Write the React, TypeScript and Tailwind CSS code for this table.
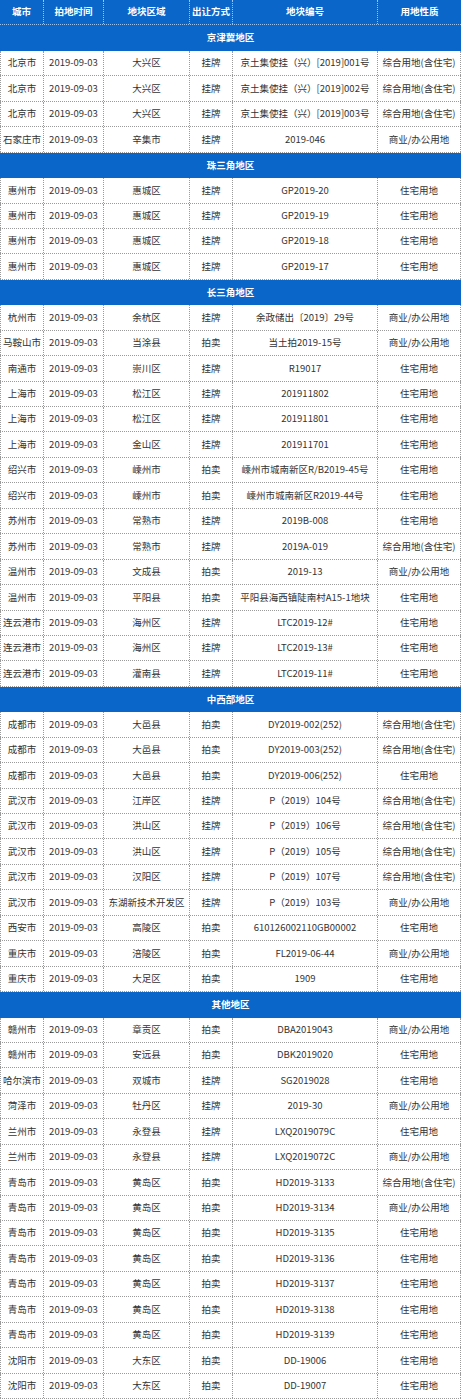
import React from 'react';

type Row = [string, string, string, string, string];

const DATE = '2019-09-03';

const sections: { title: string; rows: Row[] }[] = [
  {
    title: '京津冀地区',
    rows: [
      ['北京市', '大兴区', '挂牌', '京土集使挂（兴）[2019]001号', '综合用地(含住宅)'],
      ['北京市', '大兴区', '挂牌', '京土集使挂（兴）[2019]002号', '综合用地(含住宅)'],
      ['北京市', '大兴区', '挂牌', '京土集使挂（兴）[2019]003号', '综合用地(含住宅)'],
      ['石家庄市', '辛集市', '挂牌', '2019-046', '商业/办公用地'],
    ],
  },
  {
    title: '珠三角地区',
    rows: [
      ['惠州市', '惠城区', '挂牌', 'GP2019-20', '住宅用地'],
      ['惠州市', '惠城区', '挂牌', 'GP2019-19', '住宅用地'],
      ['惠州市', '惠城区', '挂牌', 'GP2019-18', '住宅用地'],
      ['惠州市', '惠城区', '挂牌', 'GP2019-17', '住宅用地'],
    ],
  },
  {
    title: '长三角地区',
    rows: [
      ['杭州市', '余杭区', '挂牌', '余政储出〔2019〕29号', '商业/办公用地'],
      ['马鞍山市', '当涂县', '拍卖', '当土拍2019-15号', '商业/办公用地'],
      ['南通市', '崇川区', '挂牌', 'R19017', '住宅用地'],
      ['上海市', '松江区', '挂牌', '201911802', '住宅用地'],
      ['上海市', '松江区', '挂牌', '201911801', '住宅用地'],
      ['上海市', '金山区', '挂牌', '201911701', '住宅用地'],
      ['绍兴市', '嵊州市', '拍卖', '嵊州市城南新区R/B2019-45号', '住宅用地'],
      ['绍兴市', '嵊州市', '拍卖', '嵊州市城南新区R2019-44号', '住宅用地'],
      ['苏州市', '常熟市', '挂牌', '2019B-008', '住宅用地'],
      ['苏州市', '常熟市', '挂牌', '2019A-019', '综合用地(含住宅)'],
      ['温州市', '文成县', '拍卖', '2019-13', '商业/办公用地'],
      ['温州市', '平阳县', '拍卖', '平阳县海西镇陡南村A15-1地块', '住宅用地'],
      ['连云港市', '海州区', '挂牌', 'LTC2019-12#', '住宅用地'],
      ['连云港市', '海州区', '挂牌', 'LTC2019-13#', '住宅用地'],
      ['连云港市', '灌南县', '挂牌', 'LTC2019-11#', '住宅用地'],
    ],
  },
  {
    title: '中西部地区',
    rows: [
      ['成都市', '大邑县', '拍卖', 'DY2019-002(252)', '综合用地(含住宅)'],
      ['成都市', '大邑县', '拍卖', 'DY2019-003(252)', '综合用地(含住宅)'],
      ['成都市', '大邑县', '拍卖', 'DY2019-006(252)', '住宅用地'],
      ['武汉市', '江岸区', '挂牌', 'P（2019）104号', '综合用地(含住宅)'],
      ['武汉市', '洪山区', '挂牌', 'P（2019）106号', '综合用地(含住宅)'],
      ['武汉市', '洪山区', '挂牌', 'P（2019）105号', '综合用地(含住宅)'],
      ['武汉市', '汉阳区', '挂牌', 'P（2019）107号', '综合用地(含住宅)'],
      ['武汉市', '东湖新技术开发区', '挂牌', 'P（2019）103号', '商业/办公用地'],
      ['西安市', '高陵区', '拍卖', '610126002110GB00002', '住宅用地'],
      ['重庆市', '涪陵区', '拍卖', 'FL2019-06-44', '商业/办公用地'],
      ['重庆市', '大足区', '拍卖', '1909', '住宅用地'],
    ],
  },
  {
    title: '其他地区',
    rows: [
      ['赣州市', '章贡区', '拍卖', 'DBA2019043', '商业/办公用地'],
      ['赣州市', '安远县', '拍卖', 'DBK2019020', '住宅用地'],
      ['哈尔滨市', '双城市', '挂牌', 'SG2019028', '住宅用地'],
      ['菏泽市', '牡丹区', '挂牌', '2019-30', '商业/办公用地'],
      ['兰州市', '永登县', '挂牌', 'LXQ2019079C', '住宅用地'],
      ['兰州市', '永登县', '挂牌', 'LXQ2019072C', '商业/办公用地'],
      ['青岛市', '黄岛区', '拍卖', 'HD2019-3133', '综合用地(含住宅)'],
      ['青岛市', '黄岛区', '拍卖', 'HD2019-3134', '商业/办公用地'],
      ['青岛市', '黄岛区', '拍卖', 'HD2019-3135', '住宅用地'],
      ['青岛市', '黄岛区', '拍卖', 'HD2019-3136', '住宅用地'],
      ['青岛市', '黄岛区', '拍卖', 'HD2019-3137', '住宅用地'],
      ['青岛市', '黄岛区', '拍卖', 'HD2019-3138', '住宅用地'],
      ['青岛市', '黄岛区', '拍卖', 'HD2019-3139', '住宅用地'],
      ['沈阳市', '大东区', '拍卖', 'DD-19006', '住宅用地'],
      ['沈阳市', '大东区', '拍卖', 'DD-19007', '住宅用地'],
    ],
  },
];

const headers = ['城市', '拍地时间', '地块区域', '出让方式', '地块编号', '用地性质'];

const cols = 'grid grid-cols-[44px_60px_86px_43px_145px_83px]';
const cell = 'flex items-center justify-center whitespace-nowrap border-r border-dotted border-[#9a9a9a]';

const App = () => {
  return (
    <div
      className="w-[461px] bg-white text-[9.5px] leading-none text-[#333]"
      style={{ fontFamily: '"Noto Sans CJK SC", "Noto Sans", sans-serif' }}
    >
      {/* header */}
      <div className={`${cols} h-[25.45px] bg-[#0a66c8] text-white font-bold border-b border-dotted border-[#9cc3ee]`}>
        {headers.map((h, i) => (
          <div
            key={h}
            className={`flex items-center justify-center ${i < 5 ? 'border-r border-dotted border-[#9cc3ee]' : ''}`}
          >
            {h}
          </div>
        ))}
      </div>

      {sections.map((s) => (
        <div key={s.title}>
          {/* section bar */}
          <div className="h-[25.45px] flex items-center justify-center bg-[#0a66c8] text-white font-bold">
            {s.title}
          </div>
          {s.rows.map((r, idx) => (
            <div key={idx} className={`${cols} h-[25.45px] border-b border-dotted border-[#9a9a9a]`}>
              <div className={`${cell} border-l`}>{r[0]}</div>
              <div className={cell}>{DATE}</div>
              <div className={cell}>{r[1]}</div>
              <div className={cell}>{r[2]}</div>
              <div className={cell}>{r[3]}</div>
              <div className={cell}>{r[4]}</div>
            </div>
          ))}
        </div>
      ))}
    </div>
  );
};

export default App;
